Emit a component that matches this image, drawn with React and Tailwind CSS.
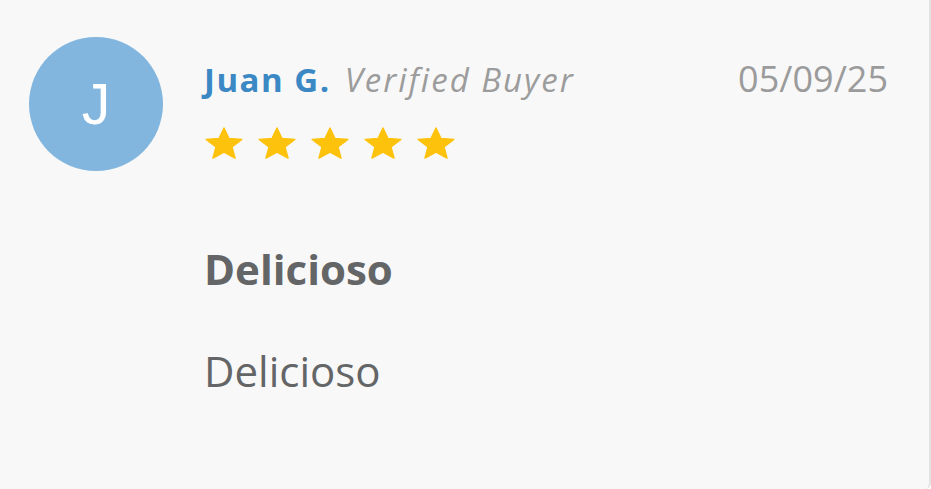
import React from 'react';

const font = { fontFamily: '"Open Sans", "Liberation Sans", sans-serif' };

function Star() {
  return (
    <svg width="38" height="32" viewBox="-1 -1 40 34" className="shrink-0">
      <polygon
        points="19,0 24.3,11.25 38,12.2 27.5,20.2 30.7,32 19,25.6 7.3,32 10.5,20.2 0,12.2 13.7,11.25"
        fill="#fdc20b"
        stroke="#fdc20b"
        strokeWidth="1.5"
        strokeLinejoin="round"
      />
    </svg>
  );
}

export default function App() {
  const rating = 5;

  return (
    <div
      className="w-full h-[489px] bg-[#f8f8f8] border-r-2 border-[#e2e2e2] rounded-br-md flex pl-[29px] pr-[41px] pt-[37px]"
      style={font}
    >
      {/* avatar */}
      <div className="w-[134px] h-[134px] shrink-0 rounded-full bg-[#82b6de] flex items-center justify-center">
        <span className="text-white text-[57px] leading-none" style={{ fontFamily: '"Liberation Sans", sans-serif' }}>J</span>
      </div>

      {/* review */}
      <div className="flex-1 ml-[41px] flex flex-col">
        <div className="flex items-baseline h-[48px] mt-[18px]">
          <span className="text-[#3b88c4] font-bold text-[33px] tracking-[1.5px] leading-[48px]">Juan G.</span>
          <span className="ml-[14px] text-[#9c9c9c] italic text-[33px] tracking-[2px] leading-[48px]">Verified Buyer</span>
          <span className="ml-auto text-[#9b9b9b] text-[36px] leading-[48px]">05/09/25</span>
        </div>

        <div className="flex gap-[15px] mt-[24px] pl-[1px]">
          {Array.from({ length: rating }).map((_, i) => (
            <Star key={i} />
          ))}
        </div>

        <h3 className="mt-[82px] text-[#646567] font-bold text-[42px] leading-[56px]">Delicioso</h3>

        <p className="mt-[46px] text-[#646567] text-[42px] leading-[56px]">Delicioso</p>
      </div>
    </div>
  );
}
